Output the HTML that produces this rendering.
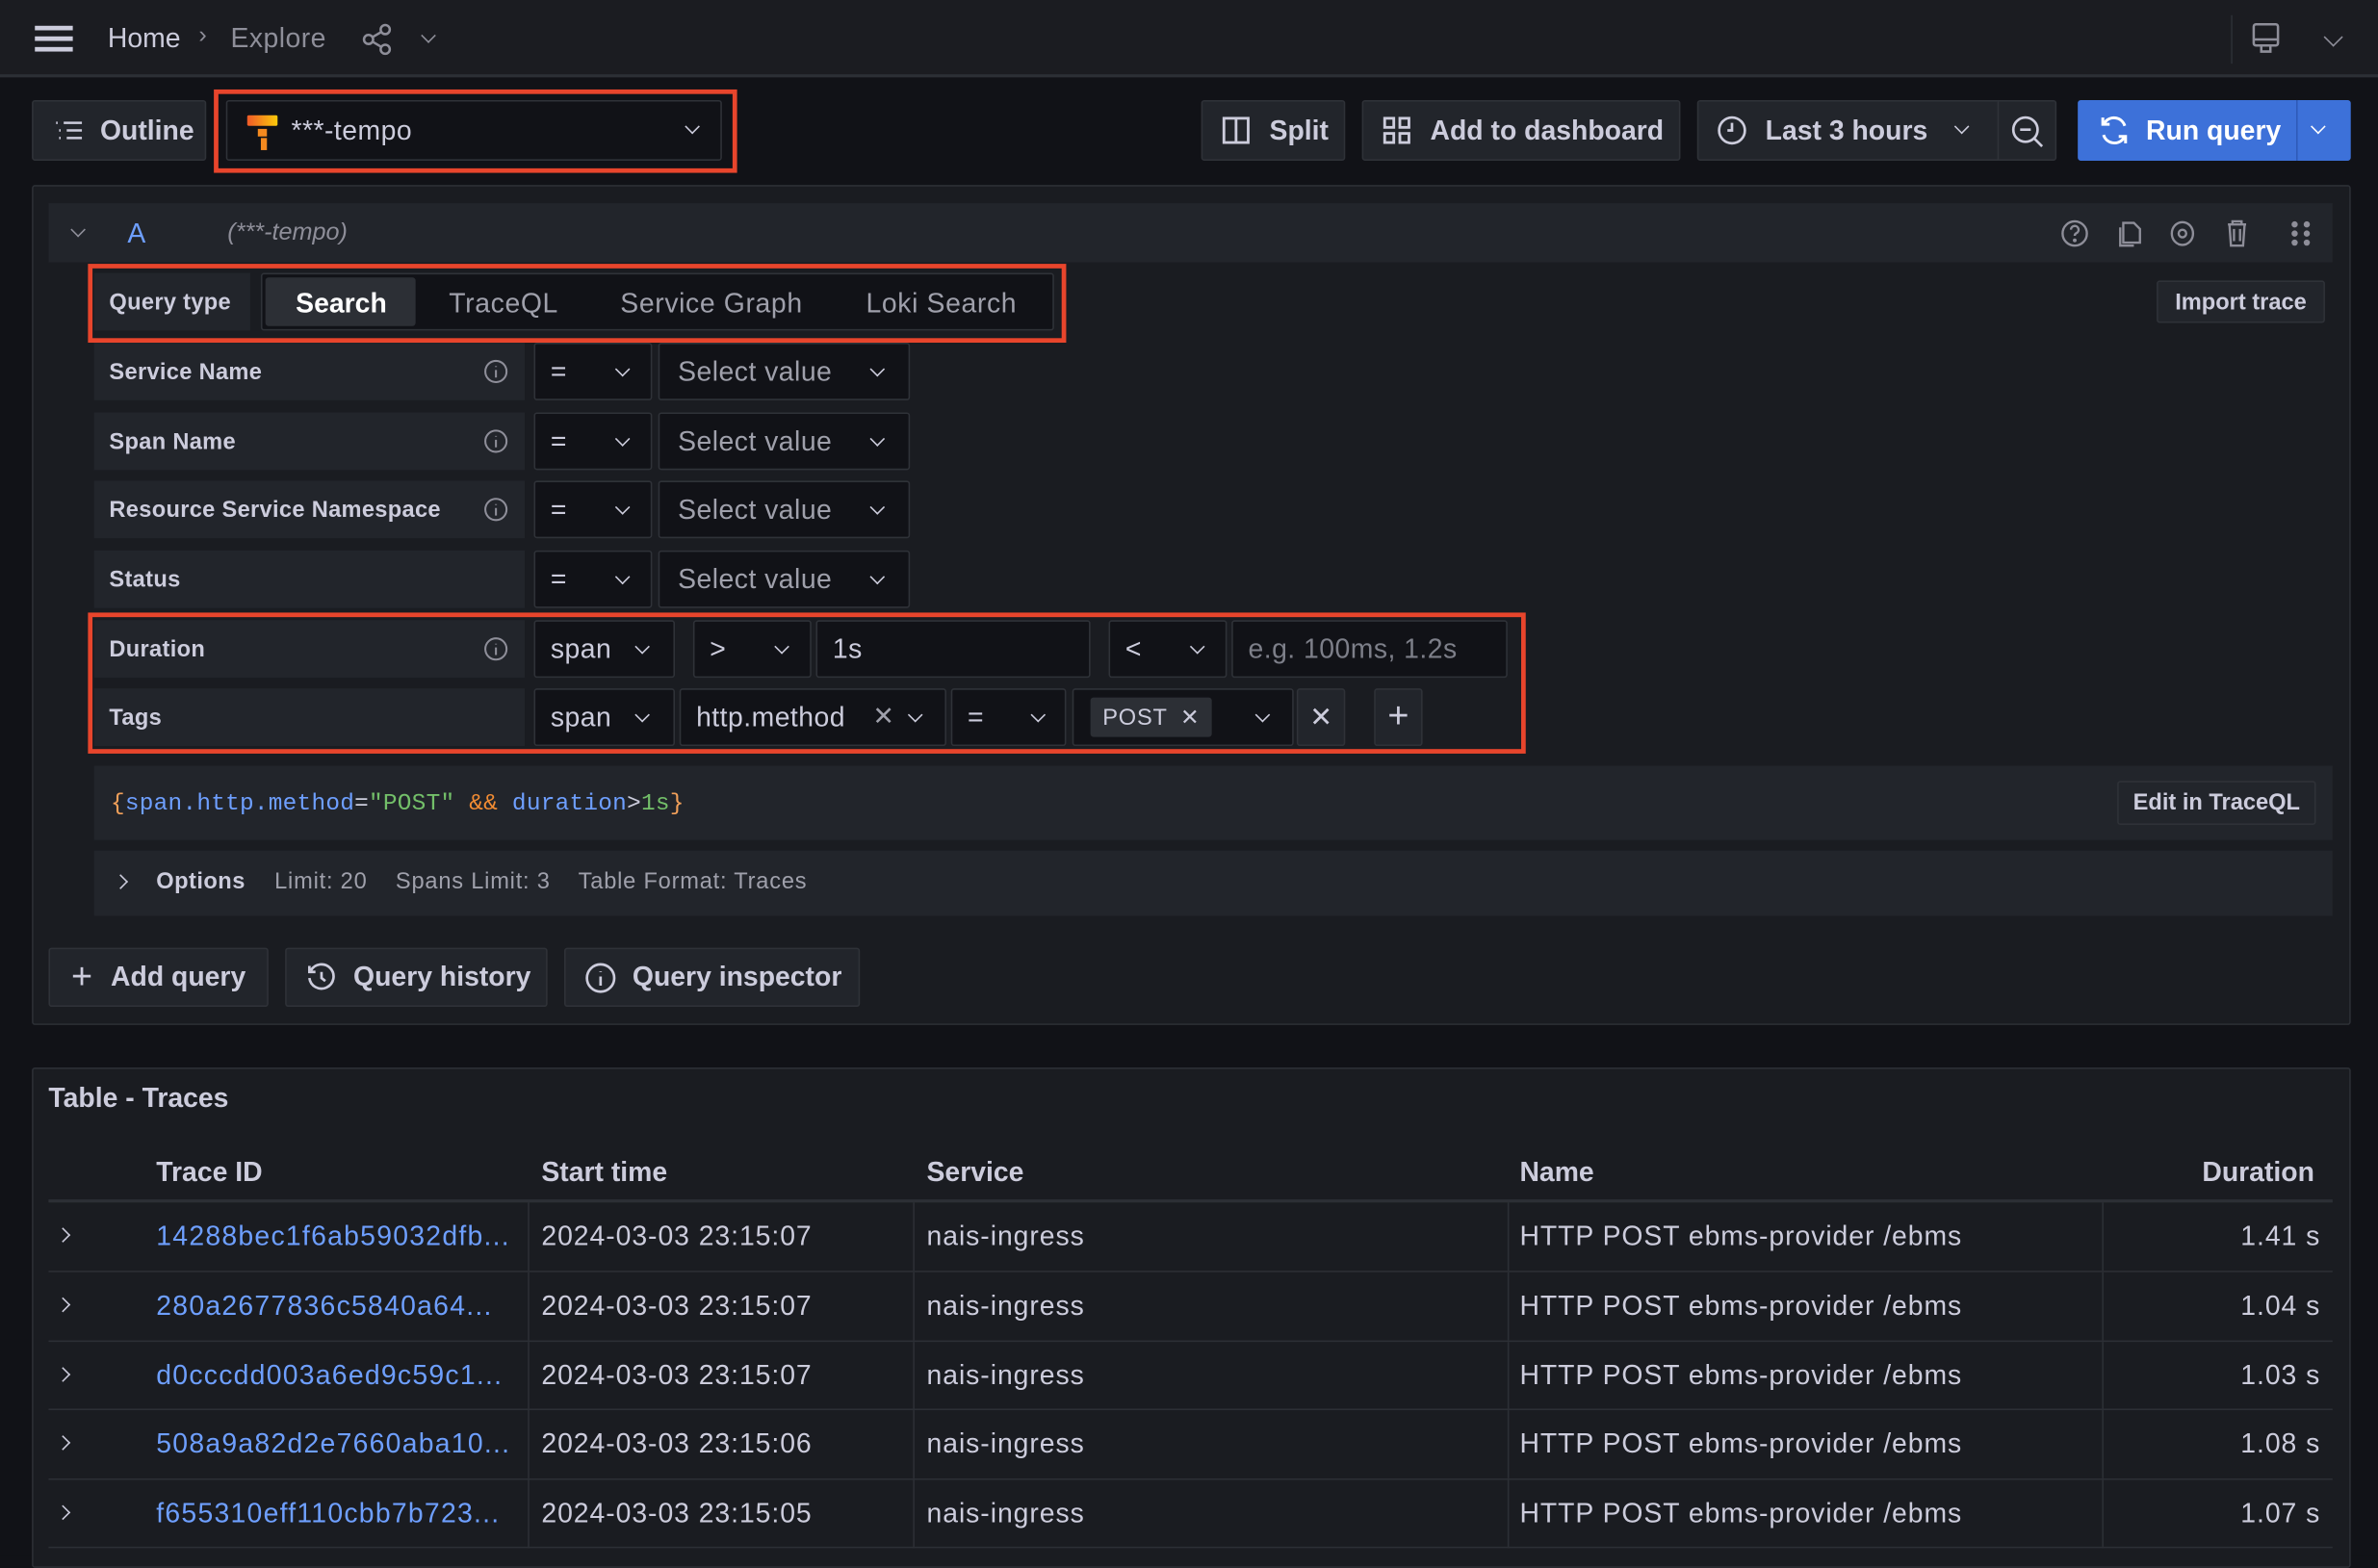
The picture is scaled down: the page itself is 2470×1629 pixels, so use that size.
<!DOCTYPE html>
<html><head><meta charset="utf-8">
<style>
*{box-sizing:border-box;margin:0;padding:0}
html,body{width:2470px;height:1616px;overflow:hidden;background:#111217}
#w{position:absolute;left:0;top:0;width:1568px;height:1026px;transform:scale(1.5753);transform-origin:0 0;font-family:"Liberation Sans",sans-serif;color:#ccccdc;background:#111217}
.a{position:absolute}
.btn{position:absolute;background:#22252b;border:1px solid #2f3238;border-radius:2px;display:flex;align-items:center;color:#ccccdc;font-size:18px;font-weight:bold;white-space:nowrap}
.lbl{position:absolute;background:#22252b;display:flex;align-items:center;font-size:15px;font-weight:bold;color:#ccccdc;padding-left:10px;letter-spacing:.2px}
.inp{position:absolute;background:#111217;border:1px solid #2f3238;border-radius:2px;display:flex;align-items:center;font-size:18px;color:#ccccdc;padding-left:10px;letter-spacing:.3px}
.red{position:absolute;border:3px solid #e8452c}
.chev{position:absolute;width:7px;height:7px;border-right:1.5px solid #ccccdc;border-bottom:1.5px solid #ccccdc;transform:rotate(45deg)}
.ic{position:absolute}
.row{position:absolute;left:32px;width:1506px;height:46px;border-top:1px solid #2c2f35;font-size:18px;letter-spacing:.6px}
.row span{position:absolute;top:12px}
.vs{position:absolute;top:0;bottom:0;width:1px;background:#2c2f35}
</style></head><body><div id="w">
<div class="a" style="left:0;top:0;width:1568px;height:51px;background:#1b1c21;border-bottom:2px solid #2c2f35"></div>
<div class="a" style="left:23px;top:17px;width:25px;height:3px;background:#ccccdc;box-shadow:0 7px 0 #ccccdc,0 14px 0 #ccccdc"></div>
<div class="a" style="left:71px;top:15px;font-size:18px;color:#ccccdc">Home</div>
<div class="a" style="left:131px;top:15px;font-size:16px;color:#8e8e99">›</div>
<div class="a" style="left:152px;top:15px;font-size:18px;color:#8e8e99;letter-spacing:.3px">Explore</div>
<svg class="ic" style="left:238px;top:15px" width="22" height="22" viewBox="0 0 22 22" fill="none" stroke="#8e8e99" stroke-width="1.6"><circle cx="16" cy="4.5" r="3"/><circle cx="5" cy="11" r="3"/><circle cx="16" cy="17.5" r="3"/><path d="M7.6 9.5l5.8-3.4M7.6 12.5l5.8 3.4"/></svg>
<div class="chev" style="left:279px;top:20px;border-color:#8e8e99"></div>
<div class="a" style="left:1471px;top:10px;width:1px;height:32px;background:#2c2f35"></div>
<svg class="ic" style="left:1484px;top:15px" width="20" height="22" viewBox="0 0 20 22" fill="none" stroke="#8e8e99" stroke-width="1.6"><rect x="2" y="1" width="16" height="14" rx="1.5"/><path d="M2 11h16M7 15v4h6v-4"/></svg>
<div class="chev" style="left:1534px;top:20px;width:9px;height:9px;border-color:#8e8e99"></div>

<div class="btn" style="left:21px;top:66px;width:115px;height:40px;padding-left:14px"><svg width="20" height="16" viewBox="0 0 20 16" fill="none" stroke="#ccccdc" stroke-width="1.6"><path d="M1 3h1M6 3h12M3 8h1M8 8h10M3 13h1M8 13h10"/></svg><span style="margin-left:10px">Outline</span></div>
<div class="inp" style="left:149px;top:66px;width:327px;height:40px;padding-left:12px"><svg width="24" height="26" viewBox="0 0 24 26"><defs><linearGradient id="g" x1="0" x2="1"><stop offset="0" stop-color="#f05a28"/><stop offset="1" stop-color="#fbca0a"/></linearGradient></defs><rect x="1" y="3" width="20" height="7" rx="1" fill="url(#g)"/><rect x="8" y="12" width="6" height="5" fill="#f58a1f"/><rect x="10" y="18" width="4" height="8" fill="#f58a1f"/></svg><span style="margin-left:6px">***-tempo</span></div>
<div class="chev" style="left:453px;top:80px"></div>
<div class="red" style="left:141px;top:59px;width:345px;height:55px"></div>

<div class="btn" style="left:792px;top:66px;width:95px;height:40px;padding-left:12px"><svg width="20" height="20" viewBox="0 0 20 20" fill="none" stroke="#ccccdc" stroke-width="1.8"><rect x="2" y="2" width="16" height="16"/><path d="M10 2v16"/></svg><span style="margin-left:12px">Split</span></div>
<div class="btn" style="left:898px;top:66px;width:210px;height:40px;padding-left:12px"><svg width="20" height="20" viewBox="0 0 20 20" fill="none" stroke="#ccccdc" stroke-width="1.8"><rect x="2" y="2" width="6" height="6"/><rect x="12" y="2" width="6" height="6"/><rect x="2" y="12" width="6" height="6"/><rect x="12" y="12" width="6" height="6"/></svg><span style="margin-left:12px">Add to dashboard</span></div>
<div class="btn" style="left:1119px;top:66px;width:237px;height:40px;padding-left:12px"><svg width="20" height="20" viewBox="0 0 20 20" fill="none" stroke="#ccccdc" stroke-width="1.7"><circle cx="10" cy="10" r="8.5"/><path d="M10 5v5H7"/></svg><span style="margin-left:12px">Last 3 hours</span></div>
<div class="chev" style="left:1290px;top:80px"></div>
<div class="a" style="left:1317px;top:66px;width:1px;height:40px;background:#2f3238"></div>
<svg class="ic" style="left:1326px;top:76px" width="22" height="22" viewBox="0 0 22 22" fill="none" stroke="#ccccdc" stroke-width="1.7"><circle cx="9.5" cy="9.5" r="8"/><path d="M6 9.5h7M15.5 15.5l5 5"/></svg>
<div class="btn" style="left:1370px;top:66px;width:180px;height:40px;background:#3d71d9;border-color:#3d71d9;color:#fff;padding-left:12px"><svg width="22" height="22" viewBox="0 0 22 22" fill="none" stroke="#fff" stroke-width="1.9"><path d="M18 8A7.5 7.5 0 0 0 5 5.5L3.5 7M4 14a7.5 7.5 0 0 0 13 2.5L18.5 15M3.5 2.5V7H8M18.5 19.5V15H14"/></svg><span style="margin-left:10px">Run query</span></div>
<div class="a" style="left:1514px;top:66px;width:1px;height:40px;background:#2f5bb8"></div>
<div class="chev" style="left:1525px;top:80px;border-color:#fff"></div>

<div class="a" style="left:21px;top:122px;width:1529px;height:554px;background:#1a1c21;border:1px solid #2c2f35;border-radius:2px"></div>
<div class="a" style="left:32px;top:134px;width:1506px;height:39px;background:#22252b"></div>
<div class="chev" style="left:48px;top:148px;border-color:#8e8e99"></div>
<div class="a" style="left:84px;top:144px;font-size:18px;color:#6e9fff">A</div>
<div class="a" style="left:150px;top:145px;font-size:16px;font-style:italic;color:#8e8e99">(***-tempo)</div>
<svg class="ic" style="left:1358px;top:143px" width="170" height="22" viewBox="0 0 170 22" fill="none" stroke="#8e8e99" stroke-width="1.5"><circle cx="10" cy="11" r="8"/><path d="M7.5 8.5a2.5 2.5 0 1 1 3.5 2.3c-.8.4-1 1-1 1.7"/><circle cx="10" cy="15.5" r=".5" fill="#8e8e99"/><path d="M42 4h7l4 4v9h-11zM40 7v12h9"/><ellipse cx="81" cy="11" rx="7" ry="7.5"/><circle cx="81" cy="11" r="2.5"/><path d="M111 5h12M114 5V3h6v2M112 5l1 14h8l1-14M115 8v8M119 8v8"/><circle cx="155" cy="5" r="1.3" fill="#8e8e99"/><circle cx="163" cy="5" r="1.3" fill="#8e8e99"/><circle cx="155" cy="11" r="1.3" fill="#8e8e99"/><circle cx="163" cy="11" r="1.3" fill="#8e8e99"/><circle cx="155" cy="17" r="1.3" fill="#8e8e99"/><circle cx="163" cy="17" r="1.3" fill="#8e8e99"/></svg>

<div class="lbl" style="left:62px;top:180px;width:103px;height:38px">Query type</div>
<div class="a" style="left:172px;top:180px;width:523px;height:38px;background:#111217;border:1px solid #2f3238;border-radius:2px"></div>
<div class="a" style="left:175px;top:183px;width:99px;height:32px;background:#2c2f35;border-radius:2px"></div>
<div class="a" style="left:195px;top:190px;font-size:18px;color:#fff;font-weight:bold">Search</div>
<div class="a" style="left:296px;top:190px;font-size:18px;color:#9fa0ab;letter-spacing:.4px">TraceQL</div>
<div class="a" style="left:409px;top:190px;font-size:18px;color:#9fa0ab;letter-spacing:.4px">Service Graph</div>
<div class="a" style="left:571px;top:190px;font-size:18px;color:#9fa0ab;letter-spacing:.4px">Loki Search</div>
<div class="red" style="left:58px;top:174px;width:645px;height:52px"></div>
<div class="btn" style="left:1422px;top:185px;width:111px;height:28px;font-size:15px;justify-content:center">Import trace</div>

<div class="lbl" style="left:62px;top:226px;width:284px;height:38px">Service Name</div>
<div class="lbl" style="left:62px;top:272px;width:284px;height:38px">Span Name</div>
<div class="lbl" style="left:62px;top:317px;width:284px;height:38px">Resource Service Namespace</div>
<div class="lbl" style="left:62px;top:363px;width:284px;height:38px">Status</div>
<div class="lbl" style="left:62px;top:409px;width:284px;height:38px">Duration</div>
<div class="lbl" style="left:62px;top:454px;width:284px;height:38px">Tags</div>
<svg class="ic" style="left:318px;top:236px" width="18" height="210" viewBox="0 0 18 210" fill="none" stroke="#8e8e99" stroke-width="1.3"><g><circle cx="9" cy="9" r="7"/><path d="M9 8v5M9 5.5v.5"/></g><g transform="translate(0,46)"><circle cx="9" cy="9" r="7"/><path d="M9 8v5M9 5.5v.5"/></g><g transform="translate(0,91)"><circle cx="9" cy="9" r="7"/><path d="M9 8v5M9 5.5v.5"/></g><g transform="translate(0,183)"><circle cx="9" cy="9" r="7"/><path d="M9 8v5M9 5.5v.5"/></g></svg>

<div class="inp" style="left:352px;top:226px;width:78px;height:38px">=</div><div class="chev" style="left:407px;top:240px"></div>
<div class="inp" style="left:434px;top:226px;width:166px;height:38px;color:#9fa0ab;padding-left:12px">Select value</div><div class="chev" style="left:575px;top:240px"></div>
<div class="inp" style="left:352px;top:272px;width:78px;height:38px">=</div><div class="chev" style="left:407px;top:286px"></div>
<div class="inp" style="left:434px;top:272px;width:166px;height:38px;color:#9fa0ab;padding-left:12px">Select value</div><div class="chev" style="left:575px;top:286px"></div>
<div class="inp" style="left:352px;top:317px;width:78px;height:38px">=</div><div class="chev" style="left:407px;top:331px"></div>
<div class="inp" style="left:434px;top:317px;width:166px;height:38px;color:#9fa0ab;padding-left:12px">Select value</div><div class="chev" style="left:575px;top:331px"></div>
<div class="inp" style="left:352px;top:363px;width:78px;height:38px">=</div><div class="chev" style="left:407px;top:377px"></div>
<div class="inp" style="left:434px;top:363px;width:166px;height:38px;color:#9fa0ab;padding-left:12px">Select value</div><div class="chev" style="left:575px;top:377px"></div>

<div class="inp" style="left:352px;top:409px;width:93px;height:38px">span</div><div class="chev" style="left:420px;top:423px"></div>
<div class="inp" style="left:457px;top:409px;width:78px;height:38px">&gt;</div><div class="chev" style="left:512px;top:423px"></div>
<div class="inp" style="left:538px;top:409px;width:181px;height:38px">1s</div>
<div class="inp" style="left:731px;top:409px;width:78px;height:38px">&lt;</div><div class="chev" style="left:786px;top:423px"></div>
<div class="inp" style="left:812px;top:409px;width:182px;height:38px;color:#7d7f89">e.g. 100ms, 1.2s</div>

<div class="inp" style="left:352px;top:454px;width:93px;height:38px">span</div><div class="chev" style="left:420px;top:468px"></div>
<div class="inp" style="left:448px;top:454px;width:176px;height:38px">http.method <span style="margin-left:18px;color:#9fa0ab;font-size:17px">✕</span></div><div class="chev" style="left:600px;top:468px"></div>
<div class="inp" style="left:627px;top:454px;width:76px;height:38px">=</div><div class="chev" style="left:681px;top:468px"></div>
<div class="inp" style="left:707px;top:454px;width:146px;height:38px;padding-left:11px"><span style="background:#2c2f35;border-radius:2px;padding:4px 8px;font-size:15px;letter-spacing:.5px">POST <span style="margin-left:4px">✕</span></span></div><div class="chev" style="left:829px;top:468px"></div>
<div class="btn" style="left:855px;top:454px;width:32px;height:38px;justify-content:center;font-weight:normal">✕</div>
<div class="btn" style="left:906px;top:454px;width:32px;height:38px;justify-content:center;font-weight:normal;font-size:24px">+</div>
<div class="red" style="left:58px;top:404px;width:948px;height:93px"></div>

<div class="a" style="left:62px;top:505px;width:1476px;height:49px;background:#22252b"></div>
<div class="a" style="left:73px;top:521px;font-family:'Liberation Mono',monospace;font-size:15.5px;letter-spacing:.15px;white-space:pre"><span style="color:#f2a05a">{</span><span style="color:#6e9fff">span.http.method</span><span style="color:#ccccdc">=</span><span style="color:#73bf69">"POST"</span> <span style="color:#f28c33">&amp;&amp;</span> <span style="color:#6e9fff">duration</span><span style="color:#ccccdc">&gt;</span><span style="color:#73bf69">1s</span><span style="color:#f2a05a">}</span></div>
<div class="btn" style="left:1396px;top:515px;width:131px;height:29px;font-size:15px;justify-content:center">Edit in TraceQL</div>
<div class="a" style="left:62px;top:561px;width:1476px;height:43px;background:#22252b"></div>
<div class="chev" style="left:76px;top:578px;transform:rotate(-45deg)"></div>
<div class="a" style="left:103px;top:573px;font-size:15px;font-weight:bold;color:#ccccdc;letter-spacing:.3px">Options</div>
<div class="a" style="left:181px;top:573px;font-size:15px;color:#9fa0ab;letter-spacing:.5px;white-space:nowrap">Limit: 20 &nbsp;&nbsp; Spans Limit: 3 &nbsp;&nbsp; Table Format: Traces</div>

<div class="btn" style="left:32px;top:625px;width:145px;height:39px;padding-left:14px"><span style="font-size:24px;font-weight:normal">+</span><span style="margin-left:12px">Add query</span></div>
<div class="btn" style="left:188px;top:625px;width:173px;height:39px;padding-left:12px"><svg width="22" height="22" viewBox="0 0 22 22" fill="none" stroke="#ccccdc" stroke-width="1.7"><path d="M4 6A8 8 0 1 1 3 11M3 3v4h4M11 7v4l2.5 2"/></svg><span style="margin-left:10px">Query history</span></div>
<div class="btn" style="left:372px;top:625px;width:195px;height:39px;padding-left:12px"><svg width="22" height="22" viewBox="0 0 22 22" fill="none" stroke="#ccccdc" stroke-width="1.7"><circle cx="11" cy="11" r="9"/><path d="M11 10v6M11 6.5v.5"/></svg><span style="margin-left:10px">Query inspector</span></div>

<div class="a" style="left:21px;top:704px;width:1529px;height:330px;background:#1a1c21;border:1px solid #2c2f35;border-radius:2px"></div>
<div class="a" style="left:32px;top:714px;font-size:18px;font-weight:bold;color:#ccccdc">Table - Traces</div>
<div class="a" style="left:103px;top:763px;font-size:18px;font-weight:bold">Trace ID</div>
<div class="a" style="left:357px;top:763px;font-size:18px;font-weight:bold">Start time</div>
<div class="a" style="left:611px;top:763px;font-size:18px;font-weight:bold">Service</div>
<div class="a" style="left:1002px;top:763px;font-size:18px;font-weight:bold">Name</div>
<div class="a" style="left:1420px;top:763px;width:106px;text-align:right;font-size:18px;font-weight:bold">Duration</div>
<div class="a" style="left:32px;top:791px;width:1506px;height:2px;background:#2c2f35"></div>

<div class="row" style="top:792px"><div class="chev" style="left:6px;top:18px;transform:rotate(-45deg)"></div><span style="left:71px;color:#6e9fff;letter-spacing:.8px">14288bec1f6ab59032dfb...</span><div class="vs" style="left:316px"></div><span style="left:325px">2024-03-03 23:15:07</span><div class="vs" style="left:570px"></div><span style="left:579px">nais-ingress</span><div class="vs" style="left:962px"></div><span style="left:970px">HTTP POST ebms-provider /ebms</span><div class="vs" style="left:1354px"></div><span style="right:8px">1.41 s</span></div>
<div class="row" style="top:838px"><div class="chev" style="left:6px;top:18px;transform:rotate(-45deg)"></div><span style="left:71px;color:#6e9fff;letter-spacing:.8px">280a2677836c5840a64...</span><div class="vs" style="left:316px"></div><span style="left:325px">2024-03-03 23:15:07</span><div class="vs" style="left:570px"></div><span style="left:579px">nais-ingress</span><div class="vs" style="left:962px"></div><span style="left:970px">HTTP POST ebms-provider /ebms</span><div class="vs" style="left:1354px"></div><span style="right:8px">1.04 s</span></div>
<div class="row" style="top:884px"><div class="chev" style="left:6px;top:18px;transform:rotate(-45deg)"></div><span style="left:71px;color:#6e9fff;letter-spacing:.8px">d0cccdd003a6ed9c59c1...</span><div class="vs" style="left:316px"></div><span style="left:325px">2024-03-03 23:15:07</span><div class="vs" style="left:570px"></div><span style="left:579px">nais-ingress</span><div class="vs" style="left:962px"></div><span style="left:970px">HTTP POST ebms-provider /ebms</span><div class="vs" style="left:1354px"></div><span style="right:8px">1.03 s</span></div>
<div class="row" style="top:929px"><div class="chev" style="left:6px;top:18px;transform:rotate(-45deg)"></div><span style="left:71px;color:#6e9fff;letter-spacing:.8px">508a9a82d2e7660aba10...</span><div class="vs" style="left:316px"></div><span style="left:325px">2024-03-03 23:15:06</span><div class="vs" style="left:570px"></div><span style="left:579px">nais-ingress</span><div class="vs" style="left:962px"></div><span style="left:970px">HTTP POST ebms-provider /ebms</span><div class="vs" style="left:1354px"></div><span style="right:8px">1.08 s</span></div>
<div class="row" style="top:975px"><div class="chev" style="left:6px;top:18px;transform:rotate(-45deg)"></div><span style="left:71px;color:#6e9fff;letter-spacing:.8px">f655310eff110cbb7b723...</span><div class="vs" style="left:316px"></div><span style="left:325px">2024-03-03 23:15:05</span><div class="vs" style="left:570px"></div><span style="left:579px">nais-ingress</span><div class="vs" style="left:962px"></div><span style="left:970px">HTTP POST ebms-provider /ebms</span><div class="vs" style="left:1354px"></div><span style="right:8px">1.07 s</span></div>
<div class="a" style="left:32px;top:1020px;width:1506px;height:1px;background:#2c2f35"></div>
</div></body></html>
